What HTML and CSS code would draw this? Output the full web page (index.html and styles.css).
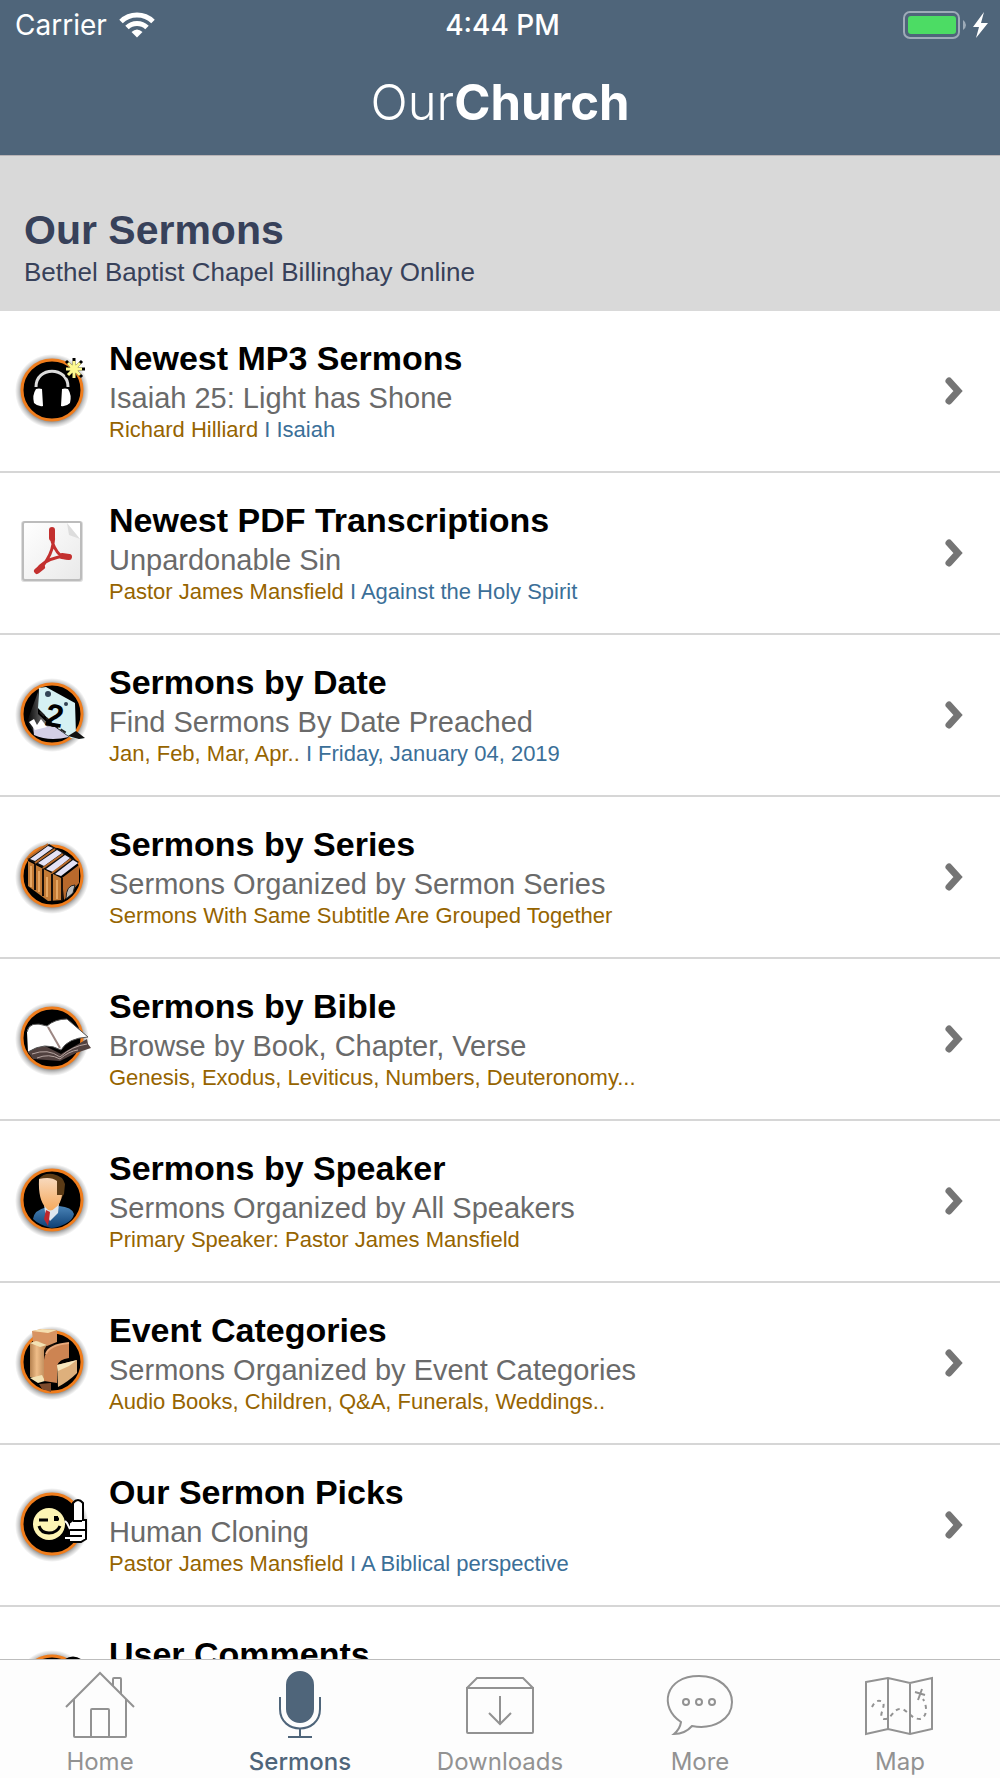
FILE: index.html
```html
<!DOCTYPE html>
<html lang="en">
<head>
  <meta charset="UTF-8" />
  <meta name="viewport" content="width=device-width, initial-scale=1" />
  <title>OurChurch - Our Sermons</title>
  <link rel="stylesheet" href="styles.css">
</head>
<body>
  <!-- shared shapes -->
  <svg class="defs" width="0" height="0" aria-hidden="true">
    <defs>
      <radialGradient id="halo">
        <stop offset="0.75" stop-color="#000" stop-opacity="0.6" />
        <stop offset="0.9" stop-color="#000" stop-opacity="0.2" />
        <stop offset="1" stop-color="#000" stop-opacity="0" />
      </radialGradient>
      <linearGradient id="face" x1="0" y1="0" x2="0" y2="1">
        <stop offset="0" stop-color="#f8d9bd" />
        <stop offset="1" stop-color="#f5a95c" />
      </linearGradient>
      <linearGradient id="suit" x1="0" y1="0" x2="0" y2="1">
        <stop offset="0" stop-color="#4a84b8" />
        <stop offset="1" stop-color="#0d3f74" />
      </linearGradient>
      <linearGradient id="wood" x1="0" y1="0" x2="1" y2="0">
        <stop offset="0" stop-color="#b5814f" />
        <stop offset="0.4" stop-color="#efbd88" />
        <stop offset="1" stop-color="#b27e4d" />
      </linearGradient>
      <linearGradient id="paper" x1="0" y1="0" x2="1" y2="1">
        <stop offset="0" stop-color="#ffffff" />
        <stop offset="1" stop-color="#e9e9e9" />
      </linearGradient>
      <linearGradient id="fade" x1="0" y1="0" x2="1" y2="0">
        <stop offset="0" stop-color="#000" />
        <stop offset="1" stop-color="#aaa" />
      </linearGradient>
      <symbol id="disc" viewBox="0 0 74 74">
        <circle cx="37" cy="37" r="37" fill="url(#halo)" />
        <circle cx="37" cy="36" r="30" fill="#000" stroke="#f07d1c" stroke-width="3" />
      </symbol>
      <symbol id="chevron" viewBox="0 0 20 30">
        <path d="M5 5l9 10-9 10" fill="none" stroke="#757575" stroke-width="7" stroke-linecap="round" />
      </symbol>
    </defs>
  </svg>

  <header class="top">
    <div class="status">
      <div class="status-left">
        <span>Carrier</span>
        <svg width="36" height="26" viewBox="0 0 36 26" fill="none" stroke="#fff" aria-hidden="true">
          <path d="M2 9.500A23 23 0 0 1 34 9.500" stroke-width="5" />
          <path d="M8 15.500A14.500 14.500 0 0 1 28 15.500" stroke-width="5" />
          <path d="M12.500 20Q18 15 23.500 20L18 25.500Z" fill="#fff" stroke="none" />
        </svg>
      </div>
      <time class="clock">4:44 PM</time>
      <div class="status-right">
        <svg width="88" height="30" viewBox="0 0 88 30" aria-hidden="true">
          <rect x="2" y="2" width="55" height="26" rx="6" fill="none" stroke="#9eabb8" stroke-width="2" />
          <rect x="6" y="6" width="48" height="18" rx="3" fill="#4cdc64" />
          <path d="M61 10q3 2 3 5t-3 5z" fill="#9eabb8" />
          <path d="M82 2L71 17h6l-3 11 12-15h-7z" fill="#fff" />
        </svg>
      </div>
    </div>
    <div class="logo">Our<b>Church</b></div>
  </header>

  <main class="content">
    <div class="heading">
      <h1>Our Sermons</h1>
      <p>Bethel Baptist Chapel Billinghay Online</p>
    </div>

    <ul class="list">
      <li>
        <a class="row" href="#mp3">
          <svg class="icon" viewBox="0 0 74 74" aria-hidden="true">
            <use href="#disc" />
            <path d="M21 33C21 12 53 12 53 33" fill="none" stroke="#ddd" stroke-width="3" />
            <path d="M21 35q3-1 6 0l1 17q-5 1-9-3q-2-8 2-14zM53 35q-3-1-6 0l-1 17q5 1 9-3q2-8-2-14z" fill="#fff" />
            <g stroke="#000" stroke-width="3"><path d="M59 4v23M48 15h22M51 7l16 16M67 7L51 23" /></g>
            <g stroke="#fdf98f" stroke-width="3"><path d="M59 7v17M51 15h16M53 9l12 12M65 9L53 21" /></g>
          </svg>
          <div class="text">
            <h2>Newest MP3 Sermons</h2>
            <p class="sub">Isaiah 25: Light has Shone</p>
            <p class="meta">Richard Hilliard <span>I Isaiah</span></p>
          </div>
          <svg class="arrow" aria-hidden="true"><use href="#chevron" /></svg>
        </a>
      </li>
      <li>
        <a class="row" href="#pdf">
          <svg class="icon" viewBox="0 0 74 74" aria-hidden="true">
            <rect x="6" y="5" width="62" height="61" rx="3" fill="#ddd" />
            <rect x="8" y="6" width="58" height="58" rx="2" fill="url(#paper)" stroke="#bcbcbc" stroke-width="2" />
            <path d="M52 7h13v16z" fill="#fff" />
            <path d="M52 7l2 12 11 4z" fill="#ddd" />
            <path d="M37 15c-4 6 5 28 16 27c5-4-22-2-31 12c-2 6 14-11 16-26c1-7 1-12-1-13z" fill="none" stroke="#c3302f" stroke-width="3" stroke-linejoin="round" />
            <path d="M37 14v8M47 40l7 1M22 55l5-4" stroke="#c3302f" stroke-width="6" stroke-linecap="round" />
          </svg>
          <div class="text">
            <h2>Newest PDF Transcriptions</h2>
            <p class="sub">Unpardonable Sin</p>
            <p class="meta">Pastor James Mansfield <span>I Against the Holy Spirit</span></p>
          </div>
          <svg class="arrow" aria-hidden="true"><use href="#chevron" /></svg>
        </a>
      </li>
      <li>
        <a class="row" href="#date">
          <svg class="icon" viewBox="0 0 74 74" aria-hidden="true">
            <use href="#disc" />
            <path d="M23 14v22l15 14-18 6-8-12z" fill="url(#fade)" />
            <path d="M18 47l22 2 14 10q-20 5-35-2z" fill="#d3cfe6" />
            <path d="M14 44l5-3 3 6 4-6 6 8-12 3z" fill="#fff" />
            <path d="M24 10l7-1 29 16 1 32 8 4-13-1-16-12-17-18z" fill="#d5f1f3" />
            <path d="M61 53l9 7-6 1-11-3z" fill="#111" />
            <circle cx="33" cy="16" r="3" fill="#345" /><circle cx="51" cy="26" r="2" fill="#345" />
            <path d="M25 34l14 13 14 9" fill="none" stroke="#222" stroke-width="2" stroke-dasharray="6 3" />
            <text x="31" y="49" class="day" transform="rotate(10 41 37)">2</text>
          </svg>
          <div class="text">
            <h2>Sermons by Date</h2>
            <p class="sub">Find Sermons By Date Preached</p>
            <p class="meta">Jan, Feb, Mar, Apr.. <span>I Friday, January 04, 2019</span></p>
          </div>
          <svg class="arrow" aria-hidden="true"><use href="#chevron" /></svg>
        </a>
      </li>
      <li>
        <a class="row" href="#series">
          <svg class="icon" viewBox="0 0 74 74" aria-hidden="true">
            <use href="#disc" />
            <path d="M12 19L34 4l30 18-18 15z" fill="#111" />
            <path d="M15 19L33 6l5 2-18 13zM23 23L42 10l5 3-18 13zM31 29L50 15l5 3-17 14zM40 34L58 20l5 3-17 13z" fill="#e4e2f6" />
            <path d="M13 18L33 4M20 23L40 9M28 28L48 14M37 33L56 19" stroke="#b86a2b" stroke-width="2" />
            <path d="M13 21l33 17 2 22-15 1-20-15z" fill="#c37a35" />
            <path d="M47 38l17-13v18L49 60z" fill="#b9692c" />
            <path d="M20 24v26M28 29v27M37 34v27M47 38v22" stroke="#1d1008" stroke-width="2" />
            <path d="M16 26v21M24 31v21M32 37v20M42 40v19" stroke="#e7a763" stroke-width="2" />
            <path d="M51 59q0-14 9-14l-2 8z" fill="#bbb" stroke="#222" />
          </svg>
          <div class="text">
            <h2>Sermons by Series</h2>
            <p class="sub">Sermons Organized by Sermon Series</p>
            <p class="meta">Sermons With Same Subtitle Are Grouped Together</p>
          </div>
          <svg class="arrow" aria-hidden="true"><use href="#chevron" /></svg>
        </a>
      </li>
      <li>
        <a class="row" href="#bible">
          <svg class="icon" viewBox="0 0 74 74" aria-hidden="true">
            <use href="#disc" />
            <path d="M13 50l15-7 18 9 26-15 1 5 3 4-15 5-16 8-27-2z" fill="#51413f" />
            <path d="M17 52q16-6 28 3 12-11 27-13M22 56q12-5 23 1 9-8 18-9" fill="none" stroke="#b7a6a2" />
            <path d="M12 30q2-12 20-6l14 24q-16-9-33 2z" fill="#fff" />
            <path d="M32 24q8-7 20-7l21 18q-20 1-27 13z" fill="#fff" />
            <path d="M12 30q2-12 20-6 8-7 20-7l21 18q-20 1-27 13-16-9-33 2" fill="none" stroke="#555" />
            <path d="M33 25l12 21" stroke="#9c8783" stroke-width="2" />
          </svg>
          <div class="text">
            <h2>Sermons by Bible</h2>
            <p class="sub">Browse by Book, Chapter, Verse</p>
            <p class="meta">Genesis, Exodus, Leviticus, Numbers, Deuteronomy...</p>
          </div>
          <svg class="arrow" aria-hidden="true"><use href="#chevron" /></svg>
        </a>
      </li>
      <li>
        <a class="row" href="#speaker">
          <svg class="icon" viewBox="0 0 74 74" aria-hidden="true">
            <use href="#disc" />
            <path d="M24 15q4-6 14-5 10 2 12 10l-1 10-5 8-8-20z" fill="#5b3b16" />
            <path d="M18 55q1-9 14-12l8 4 4-5q13 1 15 8-1 6-9 10-8 4-14 4-12-3-18-9z" fill="url(#suit)" />
            <path d="M29 40h15l-1 9-8 8-5-9z" fill="#dfe6ee" />
            <path d="M24 15q12-3 18 2v14h5q-1 9-7 13-5 5-9 0-8-8-7-29z" fill="url(#face)" />
            <path d="M31 46l4 2-1 8-1 6-4-7z" fill="#c0262d" />
          </svg>
          <div class="text">
            <h2>Sermons by Speaker</h2>
            <p class="sub">Sermons Organized by All Speakers</p>
            <p class="meta">Primary Speaker: Pastor James Mansfield</p>
          </div>
          <svg class="arrow" aria-hidden="true"><use href="#chevron" /></svg>
        </a>
      </li>
      <li>
        <a class="row" href="#events">
          <svg class="icon" viewBox="0 0 74 74" aria-hidden="true">
            <use href="#disc" />
            <path d="M15 18h27v30H15z" fill="#1a0f08" />
            <path d="M17 5l10-2 15 1v12l-10 4-14-4z" fill="#d79361" />
            <path d="M17 5l10-2 15 1-9 3z" fill="#f5dfb0" />
            <path d="M15 17l8-2 9 4-3 5v31l-14-4z" fill="url(#wood)" />
            <path d="M15 17l6-2 11 4-7 2zM15 52l12-3 3 6-7 2z" fill="#f3e2b4" />
            <path d="M29 55V34q1-15 25-17v15q-10 1-12 8v17z" fill="#cd8452" />
            <path d="M31 28q3-9 23-11" fill="none" stroke="#e9a97a" stroke-width="2" />
            <path d="M42 39l20-5v13q-8 8-19 14z" fill="#deb07c" />
            <path d="M42 39l20-5-8 6-11 5z" fill="#f6e6bd" />
            <path d="M24 58l12-1v9l-9-3z" fill="#7c4a2c" />
          </svg>
          <div class="text">
            <h2>Event Categories</h2>
            <p class="sub">Sermons Organized by Event Categories</p>
            <p class="meta">Audio Books, Children, Q&amp;A, Funerals, Weddings..</p>
          </div>
          <svg class="arrow" aria-hidden="true"><use href="#chevron" /></svg>
        </a>
      </li>
      <li>
        <a class="row" href="#picks">
          <svg class="icon" viewBox="0 0 74 74" aria-hidden="true">
            <use href="#disc" />
            <circle cx="34" cy="36" r="16" fill="#fdf5b4" />
            <path d="M24 32h9M39 31h5" stroke="#000" stroke-width="3" />
            <path d="M41 28v5" stroke="#000" stroke-width="4" />
            <path d="M24 38q2 7 10 7t11-7" fill="none" stroke="#000" stroke-width="3" />
            <path d="M58 32V15q5-6 10 0v17h3v19l-5 3H54V35z" fill="#fff" stroke="#000" stroke-width="2" />
            <path d="M50 33l2 2 3 6M50 50h5l6 2" fill="none" stroke="#fff" stroke-width="2" />
            <path d="M58 33h9M55 42h15M55 48h12" stroke="#000" stroke-width="2" />
          </svg>
          <div class="text">
            <h2>Our Sermon Picks</h2>
            <p class="sub">Human Cloning</p>
            <p class="meta">Pastor James Mansfield <span>I A Biblical perspective</span></p>
          </div>
          <svg class="arrow" aria-hidden="true"><use href="#chevron" /></svg>
        </a>
      </li>
      <li>
        <a class="row" href="#comments">
          <svg class="icon" viewBox="0 0 74 74" aria-hidden="true">
            <use href="#disc" />
            <circle cx="58" cy="20" r="12" fill="#333" stroke="#000" stroke-width="3" />
          </svg>
          <div class="text">
            <h2>User Comments</h2>
          </div>
        </a>
      </li>
    </ul>
  </main>

  <nav class="tabs">
    <a class="tab" href="#home">
      <svg viewBox="0 0 70 70" aria-hidden="true">
        <path d="M1 37L35 3l34 34M9 29v37q0 1 1 1h50q1 0 1-1V29M48 16V9q0-1 1-1h6q1 0 1 1v15M26 67V40q0-1 1-1h16q1 0 1 1v27" />
      </svg>
      <span>Home</span>
    </a>
    <a class="tab active" href="#sermons">
      <svg viewBox="0 0 70 70" aria-hidden="true">
        <rect class="solid" x="22" y="2" width="26" height="50" rx="13" />
        <path d="M15 27v12c0 26 40 26 40 0V27M35 58v9M23 67h24" />
      </svg>
      <span>Sermons</span>
    </a>
    <a class="tab" href="#downloads">
      <svg viewBox="0 0 70 70" aria-hidden="true">
        <path d="M2 18v44q0 1 1 1h64q1 0 1-1V18zM2 18L12 8h46l10 10M35 26v28M24 43l11 11 11-11" />
      </svg>
      <span>Downloads</span>
    </a>
    <a class="tab" href="#more">
      <svg viewBox="0 0 70 70" aria-hidden="true">
        <path d="M16 52C-6 38-1 6 34 6c21 0 33 13 33 26 0 17-18 28-40 24q-7 8-18 8 6-5 7-12z" />
        <circle cx="21" cy="32" r="3" /><circle cx="34" cy="32" r="3" /><circle cx="47" cy="32" r="3" />
      </svg>
      <span>More</span>
    </a>
    <a class="tab" href="#map">
      <svg viewBox="0 0 70 70" aria-hidden="true">
        <path d="M1 12l22-4 22 5 22-5v51l-22 5-22-5-22 5zM23 8v51M45 13v51M50 22l10 3M57 19l-4 11" />
        <path stroke-dasharray="4 4" d="M7 37q4-9 11-5c3 5-6 15 1 17 7 1 9-10 16-10 8 0 10 10 20 10 8-2 7-14 3-20" />
      </svg>
      <span>Map</span>
    </a>
  </nav>
</body>
</html>
```

FILE: styles.css
```css
* {
  box-sizing: border-box;
}
body {
  margin: 0;
  height: 100vh;
  display: flex;
  flex-direction: column;
  background: #fff;
  font-family: "Liberation Sans", Arial, sans-serif;
}
h1, h2, p, ul {
  margin: 0;
  padding: 0;
}
a {
  color: inherit;
  text-decoration: none;
}
.defs {
  position: absolute;
}

/* header */
.top {
  flex: none;
  background: #4f657a;
  color: #fff;
  border-bottom: 1px solid #b9b4b6;
}
.status {
  display: grid;
  grid-template-columns: 1fr auto 1fr;
  align-items: center;
  height: 50px;
  padding: 0 10px 0 15px;
  font-family: Inter, sans-serif;
  font-size: 28px;
}
.status-left {
  display: flex;
  align-items: center;
  gap: 12px;
}
.status-right {
  display: flex;
  justify-content: flex-end;
}
.clock {
  font-weight: 500;
}
.logo {
  padding: 23px 0 22px;
  text-align: center;
  font-family: Inter, sans-serif;
  font-size: 49px;
  font-weight: 300;
  line-height: 60px;
}
.logo b {
  font-weight: 700;
}

/* content */
.content {
  flex: 1;
  min-height: 0;
  overflow-y: auto;
  scrollbar-width: none;
}
.heading {
  padding: 48px 24px 23px;
  background: #d9d9d9;
  color: #37415a;
}
.heading h1 {
  font-size: 41px;
  line-height: 52px;
}
.heading p {
  font-size: 26px;
  line-height: 32px;
}
.list {
  list-style: none;
}
.row {
  display: flex;
  align-items: center;
  min-height: 162px;
  padding: 0 36px 0 15px;
  border-bottom: 2px solid #d6d6d6;
}
.icon {
  flex: none;
  width: 74px;
  height: 74px;
  margin-right: 20px;
  overflow: visible;
}
.text {
  flex: 1;
  align-self: flex-start;
  padding-top: 27px;
}
.text h2 {
  color: #000;
  font-size: 34px;
  line-height: 40px;
}
.sub {
  color: #6a6a6a;
  font-size: 29px;
  line-height: 40px;
}
.meta {
  color: #966400;
  font-size: 22px;
  line-height: 24px;
}
.meta span {
  color: #3b6f98;
}
.day {
  font: bold 32px "Liberation Sans", Arial, sans-serif;
}
.arrow {
  flex: none;
  width: 20px;
  height: 30px;
}

/* bottom tabs */
.tabs {
  flex: none;
  display: flex;
  padding: 10px 0 0;
  background: #fdfdfd;
  border-top: 1px solid #bdbdbd;
}
.tab {
  flex: 1;
  display: flex;
  flex-direction: column;
  align-items: center;
  gap: 6px;
  color: #929292;
  font-family: Inter, sans-serif;
  font-size: 24px;
  line-height: 32px;
}
.tab svg {
  width: 70px;
  height: 70px;
  fill: none;
  stroke: currentColor;
  stroke-width: 2;
}
.tab .solid {
  fill: currentColor;
}
.tab.active {
  color: #4f657a;
  font-weight: 500;
}
```
